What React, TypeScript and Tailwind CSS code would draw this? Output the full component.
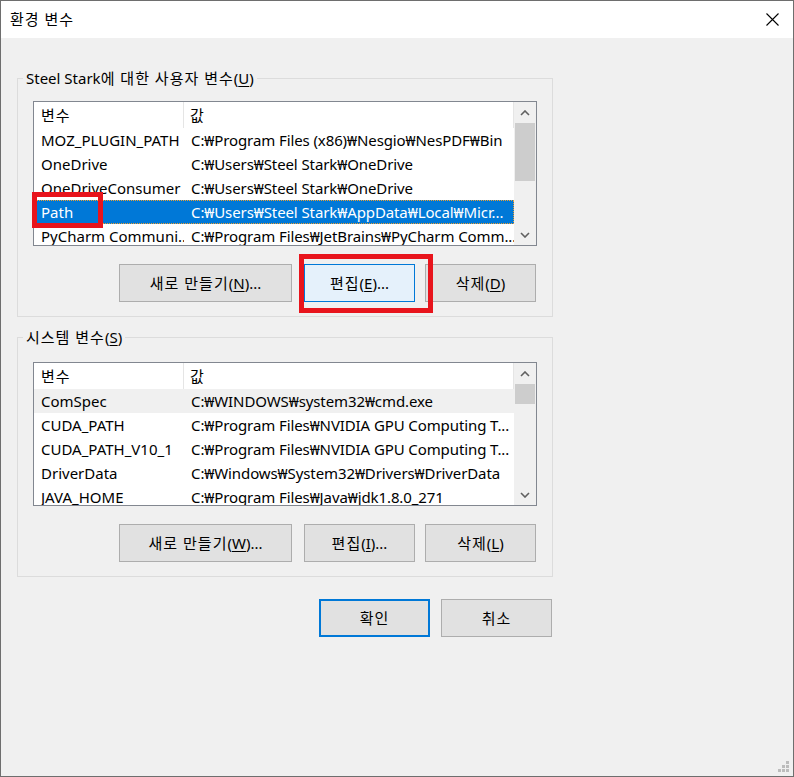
import React from "react";

type Row = { name: string; value: string };

const USER_VARS: Row[] = [
  { name: "MOZ_PLUGIN_PATH", value: "C:₩Program Files (x86)₩Nesgio₩NesPDF₩Bin" },
  { name: "OneDrive", value: "C:₩Users₩Steel Stark₩OneDrive" },
  { name: "OneDriveConsumer", value: "C:₩Users₩Steel Stark₩OneDrive" },
  { name: "Path", value: "C:₩Users₩Steel Stark₩AppData₩Local₩Micr..." },
  { name: "PyCharm Communi...", value: "C:₩Program Files₩JetBrains₩PyCharm Comm..." },
];

const SYSTEM_VARS: Row[] = [
  { name: "ComSpec", value: "C:₩WINDOWS₩system32₩cmd.exe" },
  { name: "CUDA_PATH", value: "C:₩Program Files₩NVIDIA GPU Computing T..." },
  { name: "CUDA_PATH_V10_1", value: "C:₩Program Files₩NVIDIA GPU Computing T..." },
  { name: "DriverData", value: "C:₩Windows₩System32₩Drivers₩DriverData" },
  { name: "JAVA_HOME", value: "C:₩Program Files₩Java₩jdk1.8.0_271" },
];

// hangul in the reference font runs a little wider than Noto CJK
function K({ children }: { children: React.ReactNode }) {
  return <span className="tracking-[1px]">{children}</span>;
}

function Chevron({ up }: { up?: boolean }) {
  return (
    <svg width="10" height="6" viewBox="0 0 10 6" className="block">
      <path
        d={up ? "M1 5 L5 1 L9 5" : "M1 1 L5 5 L9 1"}
        fill="none"
        stroke="#606060"
        strokeWidth="1.6"
      />
    </svg>
  );
}

function Scrollbar({ thumbTop, thumbHeight }: { thumbTop: number; thumbHeight: number }) {
  return (
    <div className="flex flex-col w-[22px] bg-[#f0f0f0] shrink-0">
      <div className="h-[21px] flex items-center justify-center shrink-0">
        <Chevron up />
      </div>
      <div className="flex-1 px-px">
        <div className="bg-[#cdcdcd]" style={{ marginTop: thumbTop, height: thumbHeight }} />
      </div>
      <div className="h-[21px] flex items-center justify-center shrink-0">
        <Chevron />
      </div>
    </div>
  );
}

function VarList({
  rows,
  height,
  selected,
  focused,
  thumbTop,
  thumbHeight,
}: {
  rows: Row[];
  height: number;
  selected: number;
  focused: boolean;
  thumbTop: number;
  thumbHeight: number;
}) {
  return (
    <div
      className="w-[504px] border border-[#828790] bg-white flex overflow-hidden"
      style={{ height }}
    >
      <div className="w-[480px] overflow-hidden">
        {/* header */}
        <div className="h-[26px] flex items-center">
          <div className="w-[150px] h-full flex items-center pl-[7px] border-r border-[#e5e5e5]"><K>변수</K></div>
          <div className="flex-1 h-full flex items-center pl-[6px] border-r border-[#e5e5e5]"><K>값</K></div>
        </div>
        {rows.map((r, i) => {
          const sel = i === selected;
          const rowCls = sel
            ? focused
              ? "bg-[#0078d7] text-white outline outline-1 outline-dotted outline-[#f0a030] -outline-offset-1"
              : "bg-[#f0f0f0]"
            : "";
          return (
            <div key={r.name} className={`h-[24px] flex items-center whitespace-nowrap ${rowCls}`}>
              <div className="w-[150px] pl-[7px] overflow-hidden">{r.name}</div>
              <div className="flex-1 pl-[7px] overflow-hidden tracking-[-0.1px]">{r.value}</div>
            </div>
          );
        })}
      </div>
      <Scrollbar thumbTop={thumbTop} thumbHeight={thumbHeight} />
    </div>
  );
}

function Mn({ children }: { children: React.ReactNode }) {
  return <span className="underline underline-offset-2">{children}</span>;
}

function Btn({
  children,
  width,
  focus,
  primary,
}: {
  children: React.ReactNode;
  width: number;
  focus?: boolean;
  primary?: boolean;
}) {
  const cls = focus
    ? "bg-[#e5f1fb] border border-[#0078d7]"
    : primary
    ? "bg-[#e1e1e1] border-2 border-[#0078d7]"
    : "bg-[#e1e1e1] border border-[#adadad]";
  return (
    <div
      className={`h-[38px] flex items-center justify-center shrink-0 ${cls}`}
      style={{ width }}
    >
      {children}
    </div>
  );
}

function GroupBox({
  label,
  children,
  height,
  padTop,
}: {
  label: React.ReactNode;
  children: React.ReactNode;
  height: number;
  padTop: number;
}) {
  return (
    <div
      className="relative w-[536px] border border-[#dcdcdc] pl-[15px] pb-[14px] flex flex-col"
      style={{ height, paddingTop: padTop }}
    >
      <span className="absolute -top-[12px] left-[5px] px-[3px] bg-[#f0f0f0] leading-[22px] whitespace-nowrap">{label}</span>
      {children}
    </div>
  );
}

function RedBox({ className }: { className: string }) {
  return <div className={`absolute border-[5px] border-[#e8141c] pointer-events-none ${className}`} />;
}

export default function App() {
  return (
    <div className="relative w-[794px] h-[777px] border border-[#6e6e6e] bg-[#f0f0f0] text-[15px] text-black font-['Segoe_UI','Noto_Sans','Noto_Sans_CJK_KR',sans-serif] overflow-hidden flex flex-col">
      {/* title bar */}
      <div className="h-[37px] bg-white flex items-center justify-between pl-[9px] pr-[14px] shrink-0">
        <K>환경 변수</K>
        <svg width="13" height="13" viewBox="0 0 13 13">
          <path d="M0.5 0.5 L12.5 12.5 M12.5 0.5 L0.5 12.5" stroke="#000" strokeWidth="1.1" />
        </svg>
      </div>

      <div className="pl-[16px] pt-[40px] flex flex-col">
        <GroupBox
          height={239}
          padTop={22}
          label={
            <>
              Steel Stark<K>에 대한 사용자 변수</K>(<Mn>U</Mn>)
            </>
          }
        >
          <VarList rows={USER_VARS} height={145} selected={3} focused thumbTop={0} thumbHeight={58} />
          <div className="mt-[18px] w-[504px] flex justify-end pr-[1px]">
            <Btn width={173}>
              <K>새로 만들기</K>(<Mn>N</Mn>)...
            </Btn>
            <div className="w-[12px]" />
            <Btn width={111} focus>
              <K>편집</K>(<Mn>E</Mn>)...
            </Btn>
            <div className="w-[10px]" />
            <Btn width={111}>
              <K>삭제</K>(<Mn>D</Mn>)
            </Btn>
          </div>
        </GroupBox>

        <div className="mt-[20px]">
          <GroupBox
            height={240}
            padTop={24}
            label={
              <>
                <K>시스템 변수</K>(<Mn>S</Mn>)
              </>
            }
          >
            <VarList rows={SYSTEM_VARS} height={144} selected={0} focused={false} thumbTop={0} thumbHeight={20} />
            <div className="mt-[18px] w-[504px] flex justify-end pr-[1px]">
              <Btn width={173}>
                <K>새로 만들기</K>(<Mn>W</Mn>)...
              </Btn>
              <div className="w-[12px]" />
              <Btn width={111}>
                <K>편집</K>(<Mn>I</Mn>)...
              </Btn>
              <div className="w-[10px]" />
              <Btn width={111}>
                <K>삭제</K>(<Mn>L</Mn>)
              </Btn>
            </div>
          </GroupBox>
        </div>

        <div className="mt-[22px] w-[536px] flex justify-end pr-[1px] gap-[11px]">
          <Btn width={111} primary>
            <K>확인</K>
          </Btn>
          <Btn width={111}>
            <K>취소</K>
          </Btn>
        </div>
      </div>

      {/* annotation boxes */}
      <RedBox className="left-[31px] top-[191px] w-[71px] h-[36px]" />
      <RedBox className="left-[298px] top-[253px] w-[134px] h-[59px]" />

      {/* resize grip */}
      <div className="absolute right-[4px] bottom-[4px] grid grid-cols-3 gap-[1px]">
        <span className="w-[3px] h-[3px]" />
        <span className="w-[3px] h-[3px]" />
        <span className="w-[3px] h-[3px] bg-[#bcbcbc]" />
        <span className="w-[3px] h-[3px]" />
        <span className="w-[3px] h-[3px] bg-[#bcbcbc]" />
        <span className="w-[3px] h-[3px] bg-[#bcbcbc]" />
        <span className="w-[3px] h-[3px] bg-[#bcbcbc]" />
        <span className="w-[3px] h-[3px] bg-[#bcbcbc]" />
        <span className="w-[3px] h-[3px] bg-[#bcbcbc]" />
      </div>
    </div>
  );
}
